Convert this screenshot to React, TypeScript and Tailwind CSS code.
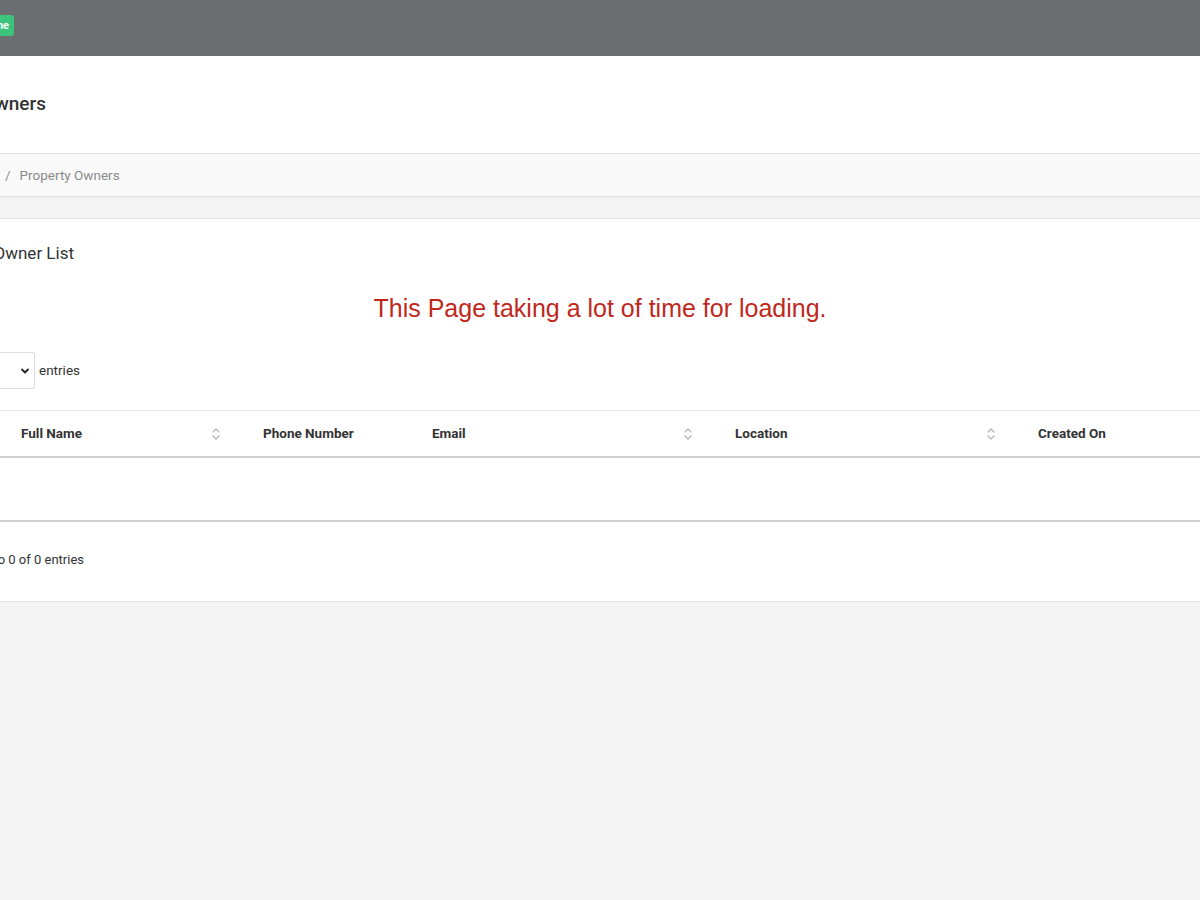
import React from "react";

function SortIcon() {
  return (
    <svg width="10" height="16" viewBox="0 0 10 16" fill="none" stroke="#b5b5b5" strokeWidth="1.3" strokeLinecap="round" strokeLinejoin="round">
      <path d="M2 6 L5 3 L8 6" />
      <path d="M2 10 L5 13 L8 10" />
    </svg>
  );
}

export default function App() {
  const cols = [
    { label: "Full Name", sort: true },
    { label: "Phone Number", sort: false },
    { label: "Email", sort: true },
    { label: "Location", sort: true },
    { label: "Created On", sort: false },
  ];
  return (
    <div className="min-h-[900px] bg-[#f3f3f3] overflow-hidden" style={{ fontFamily: "Roboto, 'Liberation Sans', sans-serif" }}>
      {/* top bar */}
      <div className="h-[56px] bg-[#6b6e71] flex items-center">
        <div className="w-[14px] flex justify-end">
          <span className="shrink-0 bg-[#3cc47c] text-white text-[11px] font-bold leading-none px-[5px] py-[5px] rounded-[3px] mt-[-5px]">Online</span>
        </div>
      </div>

      {/* page title */}
      <div className="h-[97px] bg-white flex items-center">
        <div className="w-[46px] flex justify-end">
          <h1 className="shrink-0 whitespace-nowrap text-[19px] font-medium text-[#333]">Property Owners</h1>
        </div>
      </div>

      {/* breadcrumb */}
      <div className="h-[44px] bg-[#f9f9f9] border-y border-[#e2e2e2] flex items-center text-[13.5px] text-[#8a8a8a]">
        <span className="ml-[5px]">/</span>
        <span className="ml-[9px]">Property Owners</span>
      </div>

      <div className="h-[21px]" />

      {/* card */}
      <div className="bg-white border-y border-[#e0e0e0]">
        <div className="mt-[20px] h-[30px] flex items-center">
          <div className="w-[74px] flex justify-end">
            <h2 className="shrink-0 whitespace-nowrap text-[17px] text-[#333]">Property Owner List</h2>
          </div>
        </div>

        <div className="mt-[25px] h-[30px] flex items-center justify-center">
          <p className="text-[25px] text-[#c0281c]" style={{ fontFamily: "'Liberation Sans', Arial, sans-serif" }}>
            This Page taking a lot of time for loading.
          </p>
        </div>

        <div className="mt-[28px] h-[37px] flex items-center">
          <div className="w-[35px] h-full flex justify-end">
            <div className="shrink-0 w-[70px] h-[37px] border border-[#dcdcdc] rounded-[2px] flex items-center justify-end pr-[4px]">
              <svg width="10" height="8" viewBox="0 0 10 8" fill="none" stroke="#222" strokeWidth="1.8" strokeLinecap="round" strokeLinejoin="round">
                <path d="M2 2.5 L5 5.5 L8 2.5" />
              </svg>
            </div>
          </div>
          <span className="ml-[4px] text-[13.5px] text-[#333]">entries</span>
        </div>

        {/* table */}
        <div className="mt-[21px] border-t border-[#e6e6e6]">
          <div className="grid grid-cols-[245px_169px_303px_303px_1fr] h-[47px] border-b-2 border-[#d0d0d0]">
            {cols.map((c, i) => (
              <div key={c.label} className={`flex items-center ${i === 0 ? "pl-[21px]" : "pl-[18px]"}`}>
                <span className="text-[13.5px] font-bold text-[#333]">{c.label}</span>
                {c.sort && (
                  <span className="ml-auto mr-[24px] flex">
                    <SortIcon />
                  </span>
                )}
              </div>
            ))}
          </div>
          <div className="h-[64px] border-b-2 border-[#d0d0d0]" />
        </div>

        <div className="mt-[26px] h-[24px] flex items-center">
          <div className="w-[84px] flex justify-end">
            <span className="shrink-0 whitespace-nowrap text-[13px] text-[#333]">Showing 0 to 0 of 0 entries</span>
          </div>
        </div>
        <div className="h-[29px]" />
      </div>
    </div>
  );
}
